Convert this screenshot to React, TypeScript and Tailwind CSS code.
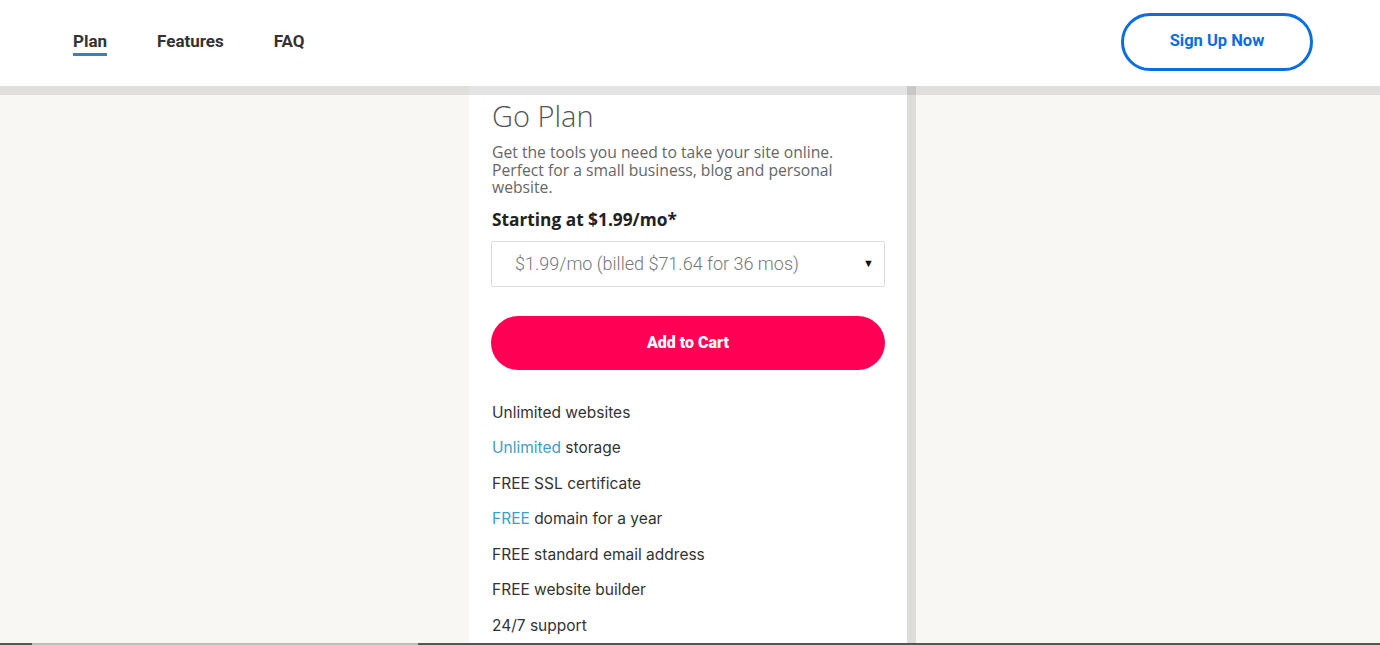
import * as React from 'react';

const features: { hi?: string; rest: string }[] = [
  { rest: 'Unlimited websites' },
  { hi: 'Unlimited', rest: ' storage' },
  { rest: 'FREE SSL certificate' },
  { hi: 'FREE', rest: ' domain for a year' },
  { rest: 'FREE standard email address' },
  { rest: 'FREE website builder' },
  { rest: '24/7 support' },
];

function Header() {
  return (
    <header className="flex h-[86px] shrink-0 items-center justify-between bg-white pb-[3px] pl-[73px] pr-[67px]">
      <nav className="flex items-center gap-[50px] font-['Roboto',sans-serif] text-[17px] font-bold text-[#333]">
        <a className="relative">
          Plan
          <span className="absolute left-0 right-0 top-[24px] h-[3px] bg-[#3f7cc0]" />
        </a>
        <a>Features</a>
        <a>FAQ</a>
      </nav>
      <button className="h-[58px] w-[192px] rounded-full border-[3px] border-[#0a6ee0] font-['Roboto',sans-serif] text-[16.5px] font-bold text-[#0a6ee0]">
        Sign Up Now
      </button>
    </header>
  );
}

function PlanCard() {
  return (
    <div className="flex w-[438px] shrink-0 flex-col bg-white">
      <div className="h-[9px] bg-[#e4e4e4]" />
      <div className="px-[22px] pt-[2px]">
        <h2 className="pl-[1px] font-['Open_Sans',sans-serif] text-[29px] font-light leading-[38px] text-[#555]">Go Plan</h2>
        <p className="mt-[9px] pl-[1px] font-['Open_Sans',sans-serif] text-[15.7px] leading-[17.5px] text-[#666]">
          Get the tools you need to take your site online. Perfect for a small business, blog and personal website.
        </p>
        <p className="mt-[11px] pl-[1px] font-['Open_Sans',sans-serif] text-[17.3px] font-bold leading-[24px] text-[#222]">
          Starting at $1.99/mo*
        </p>
        <div className="mt-[9px] flex h-[46px] items-center justify-between rounded-[2px] border border-[#dcdcdc] pl-[23px] pr-[10px]">
          <span className="font-['Roboto',sans-serif] text-[18px] font-light text-[#777]">$1.99/mo (billed $71.64 for 36 mos)</span>
          <span className="text-[11px] text-[#111]">▼</span>
        </div>
        <button className="mt-[29px] h-[54px] w-full rounded-full bg-[#ff0055] font-['Roboto',sans-serif] text-[16px] font-black text-white">
          Add to Cart
        </button>
        <ul className="mt-[33px] flex flex-col gap-[15.5px] pl-[1px] font-['Inter',sans-serif] text-[15.5px] leading-[20px] text-[#333]">
          {features.map((f) => (
            <li key={f.rest}>
              {f.hi && <span className="text-[#3aa0c4]">{f.hi}</span>}
              {f.rest}
            </li>
          ))}
        </ul>
      </div>
    </div>
  );
}

export default function App() {
  return (
    <div className="flex h-[645px] flex-col overflow-hidden bg-[#f8f7f4]">
      <Header />
      <main className="flex min-h-0 flex-1">
        <div className="w-[469px] shrink-0 border-t-[9px] border-[#e0dfdb]" />
        <PlanCard />
        <div className="flex w-[9px] shrink-0 flex-col">
          <div className="h-[9px] bg-[#c9c8c6]" />
          <div className="flex-1 bg-[#dedcd8]" />
        </div>
        <div className="flex-1 border-t-[9px] border-[#e0dfdb]" />
      </main>
      <div className="flex h-[2px] shrink-0">
        <div className="w-[32px] bg-[#555]" />
        <div className="w-[386px] bg-[#bdbdbd]" />
        <div className="flex-1 bg-[#555]" />
      </div>
    </div>
  );
}
